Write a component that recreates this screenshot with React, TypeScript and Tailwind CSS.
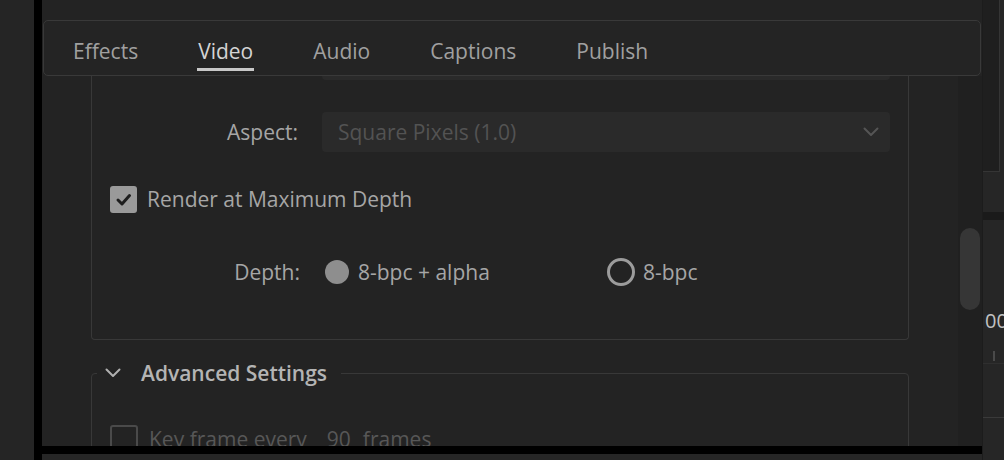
import React from 'react';

const tabs = ['Effects', 'Video', 'Audio', 'Captions', 'Publish'];

const CheckMark = () => (
    <svg width="17" height="17" viewBox="0 0 17 17" fill="none">
        <path d="M3 9 L7 13 L14.5 4.5" stroke="#1e1e1e" strokeWidth="3" strokeLinecap="round" strokeLinejoin="round" />
    </svg>
);

const Chevron = ({ color }: { color: string }) => (
    <svg width="16" height="10" viewBox="0 0 16 10" fill="none">
        <path d="M1.5 1.5 L8 8 L14.5 1.5" stroke={color} strokeWidth="2" strokeLinecap="round" strokeLinejoin="round" />
    </svg>
);

const TabBar = () => (
    <div className="mx-[1px] h-[56px] shrink-0 rounded-[5px] border border-[#393939] bg-[#242424] flex gap-[60px] pl-[29px]">
        {tabs.map((tab) => {
            const active = tab === 'Video';
            return (
                <div key={tab} className="flex flex-col items-center pt-[16px]">
                    <span className={`leading-[28px] ${active ? 'text-[#d4d4d4]' : 'text-[#a0a0a0]'}`}>{tab}</span>
                    <div className={`mt-[3px] h-[3px] w-[calc(100%+2px)] ${active ? 'bg-[#c8c8c8]' : 'bg-transparent'}`} />
                </div>
            );
        })}
    </div>
);

const OutputBox = () => (
    <div className="mx-[49px] rounded-b-[4px] border border-t-0 border-[#383838] pb-[53px]">
        {/* tail of the field scrolled under the tabs */}
        <div className="ml-[230px] mr-[18px] h-[4px] rounded-b-[4px] bg-[#2a2a2a]" />

        <div className="mt-[32px] flex items-center">
            <span className="w-[206px] text-right leading-[28px] text-[#a6a6a6]">Aspect:</span>
            <div className="ml-[24px] mr-[18px] flex h-[40px] flex-1 items-center justify-between rounded-[4px] bg-[#2a2a2a] pl-[16px] pr-[11px]">
                <span className="leading-[28px] text-[#535353]">Square Pixels (1.0)</span>
                <Chevron color="#555555" />
            </div>
        </div>

        <div className="mt-[33px] flex items-center pl-[18px]">
            <div className="flex h-[27px] w-[27px] items-center justify-center rounded-[3px] bg-[#9a9a9a]">
                <CheckMark />
            </div>
            <span className="ml-[10px] leading-[28px] text-[#a6a6a6]">Render at Maximum Depth</span>
        </div>

        <div className="mt-[45px] flex items-center">
            <span className="w-[208px] text-right leading-[28px] text-[#a6a6a6]">Depth:</span>
            <div className="ml-[23px] flex w-[284px] items-center">
                <div className="flex h-[28px] w-[28px] items-center justify-center">
                    <div className="h-[24px] w-[24px] rounded-full bg-[#8e8e8e]" />
                </div>
                <span className="ml-[7px] leading-[28px] text-[#a6a6a6]">8-bpc + alpha</span>
            </div>
            <div className="flex items-center">
                <div className="h-[28px] w-[28px] rounded-full border-[3px] border-[#9c9c9c]" />
                <span className="ml-[8px] leading-[28px] text-[#a6a6a6]">8-bpc</span>
            </div>
        </div>
    </div>
);

const AdvancedBox = () => (
    <fieldset className="mx-[49px] mt-[19px] h-[120px] rounded-[4px] border border-[#383838]">
        <legend className="ml-[5px] flex items-center pl-[8px] pr-[14px]">
            <Chevron color="#b0b0b0" />
            <span className="ml-[20px] font-semibold leading-[28px] text-[#b4b4b4]">Advanced Settings</span>
        </legend>
        <div className="mt-[38px] flex items-center pl-[18px]">
            <div className="h-[28px] w-[28px] rounded-[3px] border-2 border-[#4a4a4a]" />
            <span className="ml-[11px] whitespace-nowrap leading-[28px] text-[#575757]">
                Key frame every<span className="ml-[20px]">90</span><span className="ml-[12px]">frames</span>
            </span>
        </div>
    </fieldset>
);

const SidePanel = () => (
    <div className="w-[22px] shrink-0 overflow-hidden border-l border-[#1c1c1c] bg-[#262626] flex flex-col">
        <div className="h-[172px] w-[17px] shrink-0 border-b border-r border-[#353535] bg-[#1f1f1f]" />
        <div className="mt-[40px] h-[8px] shrink-0 bg-[#1a1a1a]" />
        <div className="mt-[88px] h-[26px] shrink-0 whitespace-nowrap pl-[2px] leading-[26px] text-[20px] text-[#c2c2c2]">00</div>
        <div className="ml-[10px] mt-[17px] h-[10px] w-[2px] shrink-0 bg-[#4a4a4a]" />
        <div className="mt-[2px] h-px shrink-0 bg-[#2f2f2f]" />
        <div className="mt-[53px] h-px shrink-0 bg-[#3a3a3a]" />
    </div>
);

export default function App() {
    return (
        <div
            className="flex h-[460px] w-[1004px] overflow-hidden bg-[#252525] text-[21px]"
            style={{ fontFamily: '"Open Sans", "Noto Sans", sans-serif' }}
        >
            <div className="w-[34px] shrink-0 bg-[#252525]" />
            <div className="w-[8px] shrink-0 bg-black" />

            <div className="flex w-[940px] shrink-0 flex-col">
                <div className="flex h-[446px] flex-col bg-[#232323] pt-[20px]">
                    <TabBar />
                    <div className="flex min-h-0 flex-1">
                        <div className="flex-1 overflow-hidden">
                            <OutputBox />
                            <AdvancedBox />
                        </div>
                        {/* Scrollbar */}
                        <div className="w-[24px] shrink-0 bg-[#202020] px-[2px]">
                            <div className="mt-[152px] h-[82px] rounded-full bg-[#363636]" />
                        </div>
                    </div>
                </div>
                <div className="h-[8px] shrink-0 bg-black" />
                <div className="flex-1 bg-[#262626]" />
            </div>

            <SidePanel />
        </div>
    );
}
